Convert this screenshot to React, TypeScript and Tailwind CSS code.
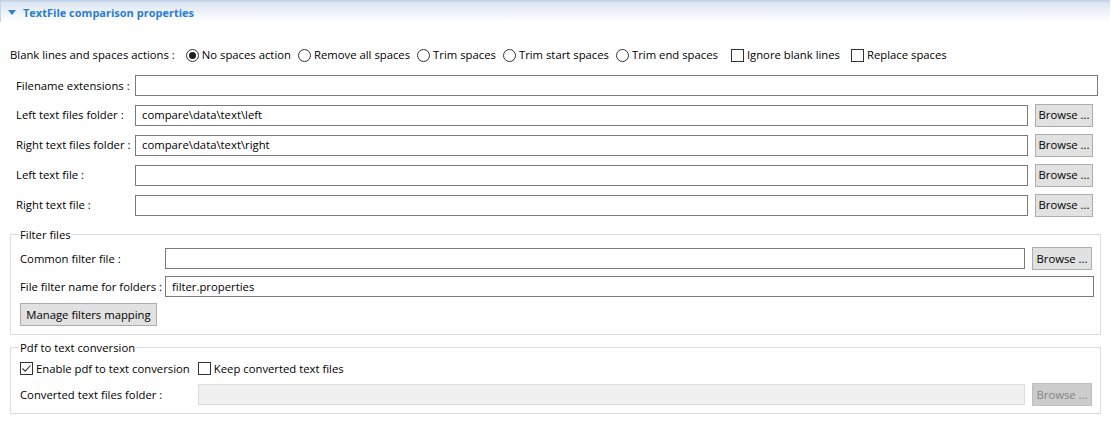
import React from "react";

const font = { fontFamily: '"Open Sans", "Noto Sans", sans-serif' };

function Radio({ checked, label }: { checked?: boolean; label: string }) {
  return (
    <span className="flex items-center gap-[3px] whitespace-nowrap">
      <span className="w-[13px] h-[13px] rounded-full border border-[#333] bg-white flex items-center justify-center">
        {checked && <span className="w-[7px] h-[7px] rounded-full bg-[#222]" />}
      </span>
      <span>{label}</span>
    </span>
  );
}

function Check({ checked, label }: { checked?: boolean; label: string }) {
  return (
    <span className="flex items-center gap-[3px] whitespace-nowrap">
      <span className="w-[13px] h-[13px] border border-[#333] bg-white flex items-center justify-center">
        {checked && (
          <svg width="11" height="11" viewBox="0 0 11 11">
            <path d="M1.5 5.5 L4.2 8.2 L9.5 2.5" fill="none" stroke="#333" strokeWidth="1.1" />
          </svg>
        )}
      </span>
      <span>{label}</span>
    </span>
  );
}

function Input({ value, disabled, className = "" }: { value?: string; disabled?: boolean; className?: string }) {
  return (
    <div
      className={
        "h-[21px] flex items-center px-[6px] border whitespace-nowrap " +
        (disabled ? "bg-[#f0f0f0] border-[#dcdcdc]" : "bg-white border-[#7a7a7a]") +
        " " +
        className
      }
    >
      {value}
    </div>
  );
}

function Button({ label, disabled, className = "" }: { label: string; disabled?: boolean; className?: string }) {
  return (
    <div
      className={
        "h-[23px] flex items-center justify-center border whitespace-nowrap " +
        (disabled ? "bg-[#cccccc] border-[#bfbfbf] text-[#838383]" : "bg-[#e1e1e1] border-[#adadad]") +
        " " +
        className
      }
    >
      {label}
    </div>
  );
}

export default function App() {
  return (
    <div className="w-[1111px] h-[425px] bg-white text-[11.3px] text-[#000] leading-none" style={font}>
      <div className="w-[1110px] border-t-[2px] border-l border-[#c4d5ea] h-[22px] bg-gradient-to-b from-[#dce5f1] to-white flex items-center pl-[7px]">
        <svg width="8" height="5" viewBox="0 0 8 5" className="mr-[7px]">
          <path d="M0 0 H8 L4 5 Z" fill="#2f7fd0" />
        </svg>
        <span className="font-bold text-[#2a7dd0] text-[11px]">TextFile comparison properties</span>
      </div>

      <div className="pl-[10px] mt-[24px] h-[18px] flex items-center gap-[10px] whitespace-nowrap">
        <span className="mr-[1px]">Blank lines and spaces actions :</span>
        <span className="flex items-center gap-[7px]">
          <Radio checked label="No spaces action" />
          <Radio label="Remove all spaces" />
          <Radio label="Trim spaces" />
          <Radio label="Trim start spaces" />
          <Radio label="Trim end spaces" />
        </span>
        <span className="flex items-center gap-[11px] ml-[3px]">
          <Check label="Ignore blank lines" />
          <Check label="Replace spaces" />
        </span>
      </div>

      <div className="pl-[16px] pr-[13px] mt-[7px] flex flex-col">
        <div className="h-[29px] flex items-center">
          <span className="w-[119px] whitespace-nowrap">Filename extensions :</span>
          <Input className="flex-1" />
        </div>
        {[
          ["Left text files folder :", "compare\\data\\text\\left"],
          ["Right text files folder :", "compare\\data\\text\\right"],
          ["Left text file :", ""],
          ["Right text file :", ""],
        ].map(([l, v]) => (
          <div key={l} className="h-[30px] flex items-center">
            <span className="w-[119px] whitespace-nowrap">{l}</span>
            <Input className="flex-1" value={v} />
            <Button label="Browse ..." className="w-[58px] ml-[7px] mr-[5px]" />
          </div>
        ))}
      </div>

      <fieldset className="mx-[10px] mt-[9px] border border-[#dcdcdc] pl-[9px] pr-[6px] pb-[8px]">
        <legend className="px-[1px] -ml-[1px]">Filter files</legend>
        <div className="h-[28px] flex items-center mt-[4px]">
          <span className="w-[145px] whitespace-nowrap">Common filter file :</span>
          <Input className="flex-1" />
          <Button label="Browse ..." className="w-[60px] ml-[7px] mr-[2px]" />
        </div>
        <div className="h-[28px] flex items-center">
          <span className="w-[145px] whitespace-nowrap">File filter name for folders :</span>
          <Input className="flex-1" value="filter.properties" />
        </div>
        <Button label="Manage filters mapping" className="w-[137px] mt-[3px]" />
      </fieldset>

      <fieldset className="mx-[10px] mt-[7px] border border-[#dcdcdc] pl-[9px] pr-[8px] pb-[4px]">
        <legend className="px-[1px] -ml-[1px]">Pdf to text conversion</legend>
        <div className="h-[18px] flex items-center gap-[8px] mt-[6px]">
          <Check checked label="Enable pdf to text conversion" />
          <Check label="Keep converted text files" />
        </div>
        <div className="h-[28px] flex items-center mt-[3px]">
          <span className="w-[178px] whitespace-nowrap">Converted text files folder :</span>
          <Input className="flex-1" disabled />
          <Button label="Browse ..." disabled className="w-[60px] ml-[7px]" />
        </div>
      </fieldset>
    </div>
  );
}
